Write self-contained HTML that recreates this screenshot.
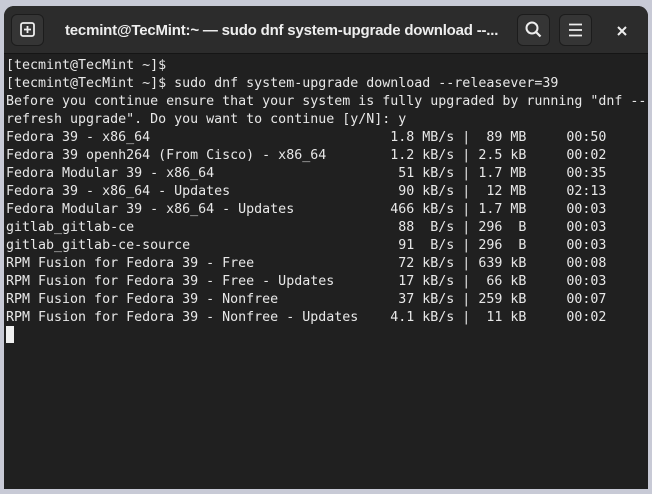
<!DOCTYPE html>
<html><head><style>
html,body{margin:0;padding:0;width:652px;height:494px;overflow:hidden;background:#c8cad6;}
.win{position:absolute;left:4px;top:6px;width:644px;height:483px;background:#202020;border-radius:10px 10px 0 0;overflow:hidden;}
.hdr{position:absolute;left:0;top:0;width:644px;height:47px;background:#2c2c2c;border-bottom:1px solid #151515;}
.btn{position:absolute;top:8px;width:33px;height:32px;background:#353535;border:1px solid #1c1c1c;border-radius:6px;box-sizing:border-box;}
.title{position:absolute;left:61px;top:16px;font:bold 15px "Liberation Sans",sans-serif;color:#eee;letter-spacing:-0.2px;}
pre{position:absolute;left:2px;top:51px;margin:0;font:13.3px/18px "DejaVu Sans Mono","Liberation Mono",monospace;color:#e8e8e8;}
.cur{position:absolute;left:2px;top:320px;width:8px;height:17px;background:#f0f0f0;}
</style></head><body>
<div class="win">
<div class="hdr">
<div class="btn" style="left:7px"><svg width="31" height="30" viewBox="0 0 31 30"><rect x="9" y="8" width="13" height="13" rx="2" fill="none" stroke="#eee" stroke-width="1.8"/><path d="M15.5 11v7M12 14.5h7" stroke="#eee" stroke-width="1.8"/></svg></div>
<div class="title">tecmint@TecMint:~ — sudo dnf system-upgrade download --...</div>
<div class="btn" style="left:513px"><svg width="31" height="30" viewBox="0 0 31 30"><circle cx="14" cy="13" r="5.5" fill="none" stroke="#eee" stroke-width="2"/><path d="M18 17l4.5 4.5" stroke="#eee" stroke-width="2.2"/></svg></div>
<div class="btn" style="left:555px"><svg width="31" height="30" viewBox="0 0 31 30"><path d="M9 9.5h13M9 15h13M9 20.5h13" stroke="#eee" stroke-width="1.8"/></svg></div>
<svg style="position:absolute;left:612px;top:19px" width="12" height="12" viewBox="0 0 12 12"><path d="M2 2l8 8M10 2l-8 8" stroke="#eee" stroke-width="2"/></svg>
</div>
<pre>[tecmint@TecMint ~]$
[tecmint@TecMint ~]$ sudo dnf system-upgrade download --releasever=39
Before you continue ensure that your system is fully upgraded by running "dnf --
refresh upgrade". Do you want to continue [y/N]: y
Fedora 39 - x86_64                              1.8 MB/s |  89 MB     00:50
Fedora 39 openh264 (From Cisco) - x86_64        1.2 kB/s | 2.5 kB     00:02
Fedora Modular 39 - x86_64                       51 kB/s | 1.7 MB     00:35
Fedora 39 - x86_64 - Updates                     90 kB/s |  12 MB     02:13
Fedora Modular 39 - x86_64 - Updates            466 kB/s | 1.7 MB     00:03
gitlab_gitlab-ce                                 88  B/s | 296  B     00:03
gitlab_gitlab-ce-source                          91  B/s | 296  B     00:03
RPM Fusion for Fedora 39 - Free                  72 kB/s | 639 kB     00:08
RPM Fusion for Fedora 39 - Free - Updates        17 kB/s |  66 kB     00:03
RPM Fusion for Fedora 39 - Nonfree               37 kB/s | 259 kB     00:07
RPM Fusion for Fedora 39 - Nonfree - Updates    4.1 kB/s |  11 kB     00:02</pre>
<div class="cur"></div>
</div>
</body></html>
